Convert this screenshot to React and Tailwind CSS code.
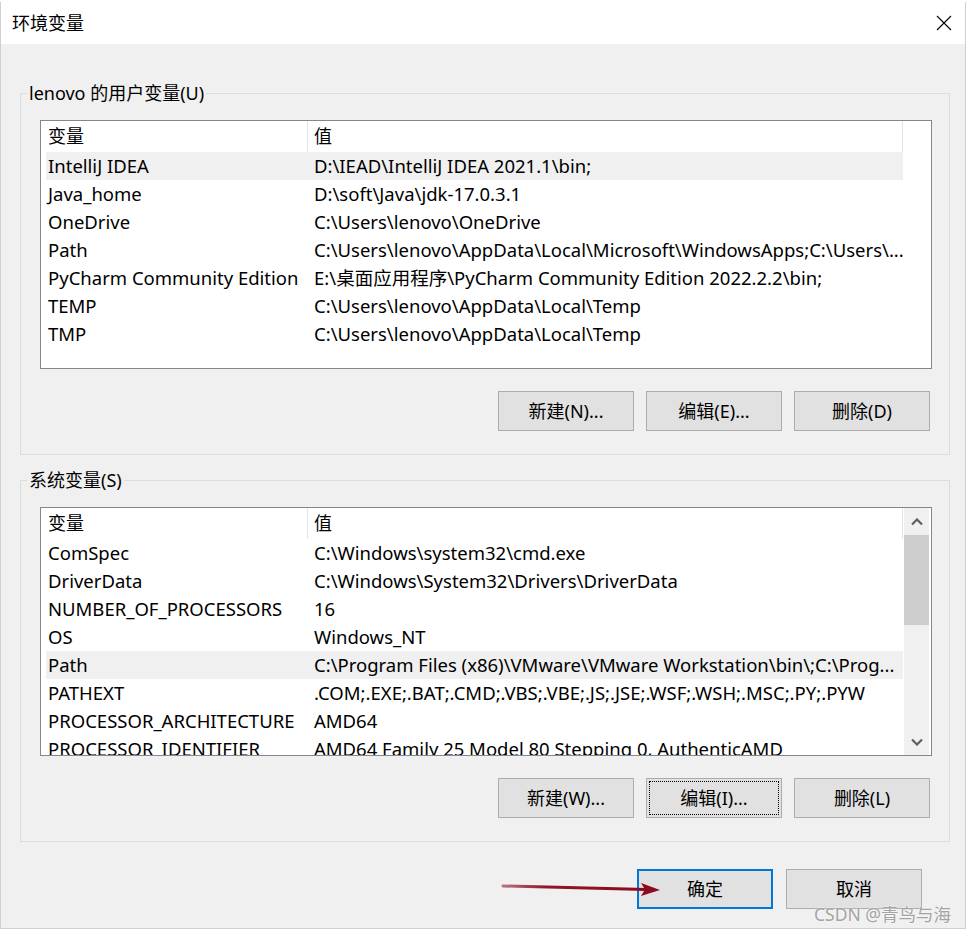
import React from 'react';

const userVars = [
  ['IntelliJ IDEA', 'D:\\IEAD\\IntelliJ IDEA 2021.1\\bin;'],
  ['Java_home', 'D:\\soft\\Java\\jdk-17.0.3.1'],
  ['OneDrive', 'C:\\Users\\lenovo\\OneDrive'],
  ['Path', 'C:\\Users\\lenovo\\AppData\\Local\\Microsoft\\WindowsApps;C:\\Users\\...'],
  ['PyCharm Community Edition', 'E:\\桌面应用程序\\PyCharm Community Edition 2022.2.2\\bin;'],
  ['TEMP', 'C:\\Users\\lenovo\\AppData\\Local\\Temp'],
  ['TMP', 'C:\\Users\\lenovo\\AppData\\Local\\Temp'],
];

const sysVars = [
  ['ComSpec', 'C:\\Windows\\system32\\cmd.exe'],
  ['DriverData', 'C:\\Windows\\System32\\Drivers\\DriverData'],
  ['NUMBER_OF_PROCESSORS', '16'],
  ['OS', 'Windows_NT'],
  ['Path', 'C:\\Program Files (x86)\\VMware\\VMware Workstation\\bin\\;C:\\Prog...'],
  ['PATHEXT', '.COM;.EXE;.BAT;.CMD;.VBS;.VBE;.JS;.JSE;.WSF;.WSH;.MSC;.PY;.PYW'],
  ['PROCESSOR_ARCHITECTURE', 'AMD64'],
  ['PROCESSOR_IDENTIFIER', 'AMD64 Family 25 Model 80 Stepping 0, AuthenticAMD'],
];

const Chevron = ({ down }) => (
  <svg width="12" height="8" viewBox="0 0 12 8">
    <polyline
      points={down ? '1,1.5 6,6.5 11,1.5' : '1,6.5 6,1.5 11,6.5'}
      fill="none"
      stroke="#606060"
      strokeWidth="2.2"
    />
  </svg>
);

const Scrollbar = () => (
  <div className="ml-[1px] w-[25px] h-full flex flex-col bg-[#f0f0f0]">
    <div className="h-[27px] flex items-center justify-center">
      <Chevron />
    </div>
    <div className="h-[90px] bg-[#cdcdcd]" />
    <div className="flex-1" />
    <div className="h-[27px] flex items-center justify-center">
      <Chevron down />
    </div>
  </div>
);

const VarList = ({ rows, selected, scrollbar }) => (
  <div className="flex w-[892px] h-[249px] border border-[#828790] bg-white overflow-hidden text-[18.5px]">
    <div className="ml-[5px] w-[857px] flex flex-col">
      {/* header */}
      <div className="flex h-[31px] shrink-0 leading-[31px] text-[18px]">
        <div className="w-[262px] pl-[2px] border-r border-[#e5e5e5]">变量</div>
        <div className="flex-1 pl-[6px] border-r border-[#e5e5e5]">值</div>
      </div>
      {rows.map(([name, value], i) => (
        <div
          key={name + i}
          className={`flex h-[28px] shrink-0 leading-[28px] ${i === selected ? 'bg-[#f0f0f0]' : ''}`}
        >
          <div className="w-[262px] pl-[2px] whitespace-nowrap overflow-hidden">{name}</div>
          <div className="flex-1 pl-[6px] whitespace-nowrap overflow-hidden">{value}</div>
        </div>
      ))}
    </div>
    {scrollbar && <Scrollbar />}
  </div>
);

const Btn = ({ children, focus, primary }) => (
  <button
    className={`w-[136px] h-[40px] flex items-center justify-center bg-[#e1e1e1] leading-none
      ${primary ? 'border-2 border-[#0078d7]' : 'border border-[#adadad]'}
      ${focus ? '[outline:1px_dotted_#000] [outline-offset:-4px]' : ''}`}
  >
    {children}
  </button>
);

const Group = ({ label, rows, selected, scrollbar, buttons, className = '' }) => (
  <fieldset className={`w-[930px] border border-[#dcdcdc] ${className}`}>
    <legend className="ml-[6px] px-[2px] leading-[24px]">{label}</legend>
    <div className="mt-[15px] ml-[19px]">
      <VarList rows={rows} selected={selected} scrollbar={scrollbar} />
    </div>
    <div className="mt-[22px] mb-[23px] pr-[19px] flex justify-end gap-[12px]">
      {buttons.map((b) => (
        <Btn key={b.text} focus={b.focus}>{b.text}</Btn>
      ))}
    </div>
  </fieldset>
);

export default function App() {
  return (
    <div className="relative w-[970px] h-[931px] overflow-hidden bg-white text-[18px] text-black font-['Noto_Sans','Noto_Sans_CJK_SC',sans-serif]">
      <div className="mt-[2px] w-[966px] h-[927px] flex flex-col border-l border-r border-b border-[#d0d0d0]">
        {/* title bar */}
        <div className="h-[42px] shrink-0 bg-white flex items-center justify-between pl-[11px] pr-[13px]">
          <span>环境变量</span>
          <svg width="16" height="16" viewBox="0 0 16 16">
            <path d="M1 1 L15 15 M15 1 L1 15" stroke="#000" strokeWidth="1.1" />
          </svg>
        </div>

        {/* body */}
        <div className="flex-1 bg-[#f0f0f0] pl-[19px] pt-[37px]">
          <Group
            label="lenovo 的用户变量(U)"
            rows={userVars}
            selected={0}
            buttons={[{ text: '新建(N)...' }, { text: '编辑(E)...' }, { text: '删除(D)' }]}
          />
          <Group
            className="mt-[13px]"
            label="系统变量(S)"
            rows={sysVars}
            selected={4}
            scrollbar
            buttons={[{ text: '新建(W)...' }, { text: '编辑(I)...', focus: true }, { text: '删除(L)' }]}
          />
          <div className="mt-[27px] w-[902px] flex justify-end gap-[13px]">
            <Btn primary>确定</Btn>
            <Btn>取消</Btn>
          </div>
        </div>
      </div>

      {/* annotation arrow */}
      <svg className="absolute left-[500px] top-[877px]" width="165" height="22" viewBox="0 0 165 22">
        <defs>
          <linearGradient id="arr" x1="0" x2="1" y1="0" y2="0">
            <stop offset="0" stopColor="#8b0a1e" stopOpacity="0.55" />
            <stop offset="0.3" stopColor="#8b0a1e" stopOpacity="0.95" />
            <stop offset="1" stopColor="#8b0a1e" />
          </linearGradient>
        </defs>
        <path d="M3 9 L146 12.5" stroke="url(#arr)" strokeWidth="3" strokeLinecap="round" />
        <polygon points="141,6 160,13 141,19 145,12.5" fill="#8b0a1e" />
      </svg>

      {/* watermark */}
      <div className="absolute left-[814px] top-[902px] text-[17.5px] leading-[24px] text-[#a3a3a3] [text-shadow:0_0_2px_#fff] whitespace-nowrap">
        CSDN @青鸟与海
      </div>
    </div>
  );
}
